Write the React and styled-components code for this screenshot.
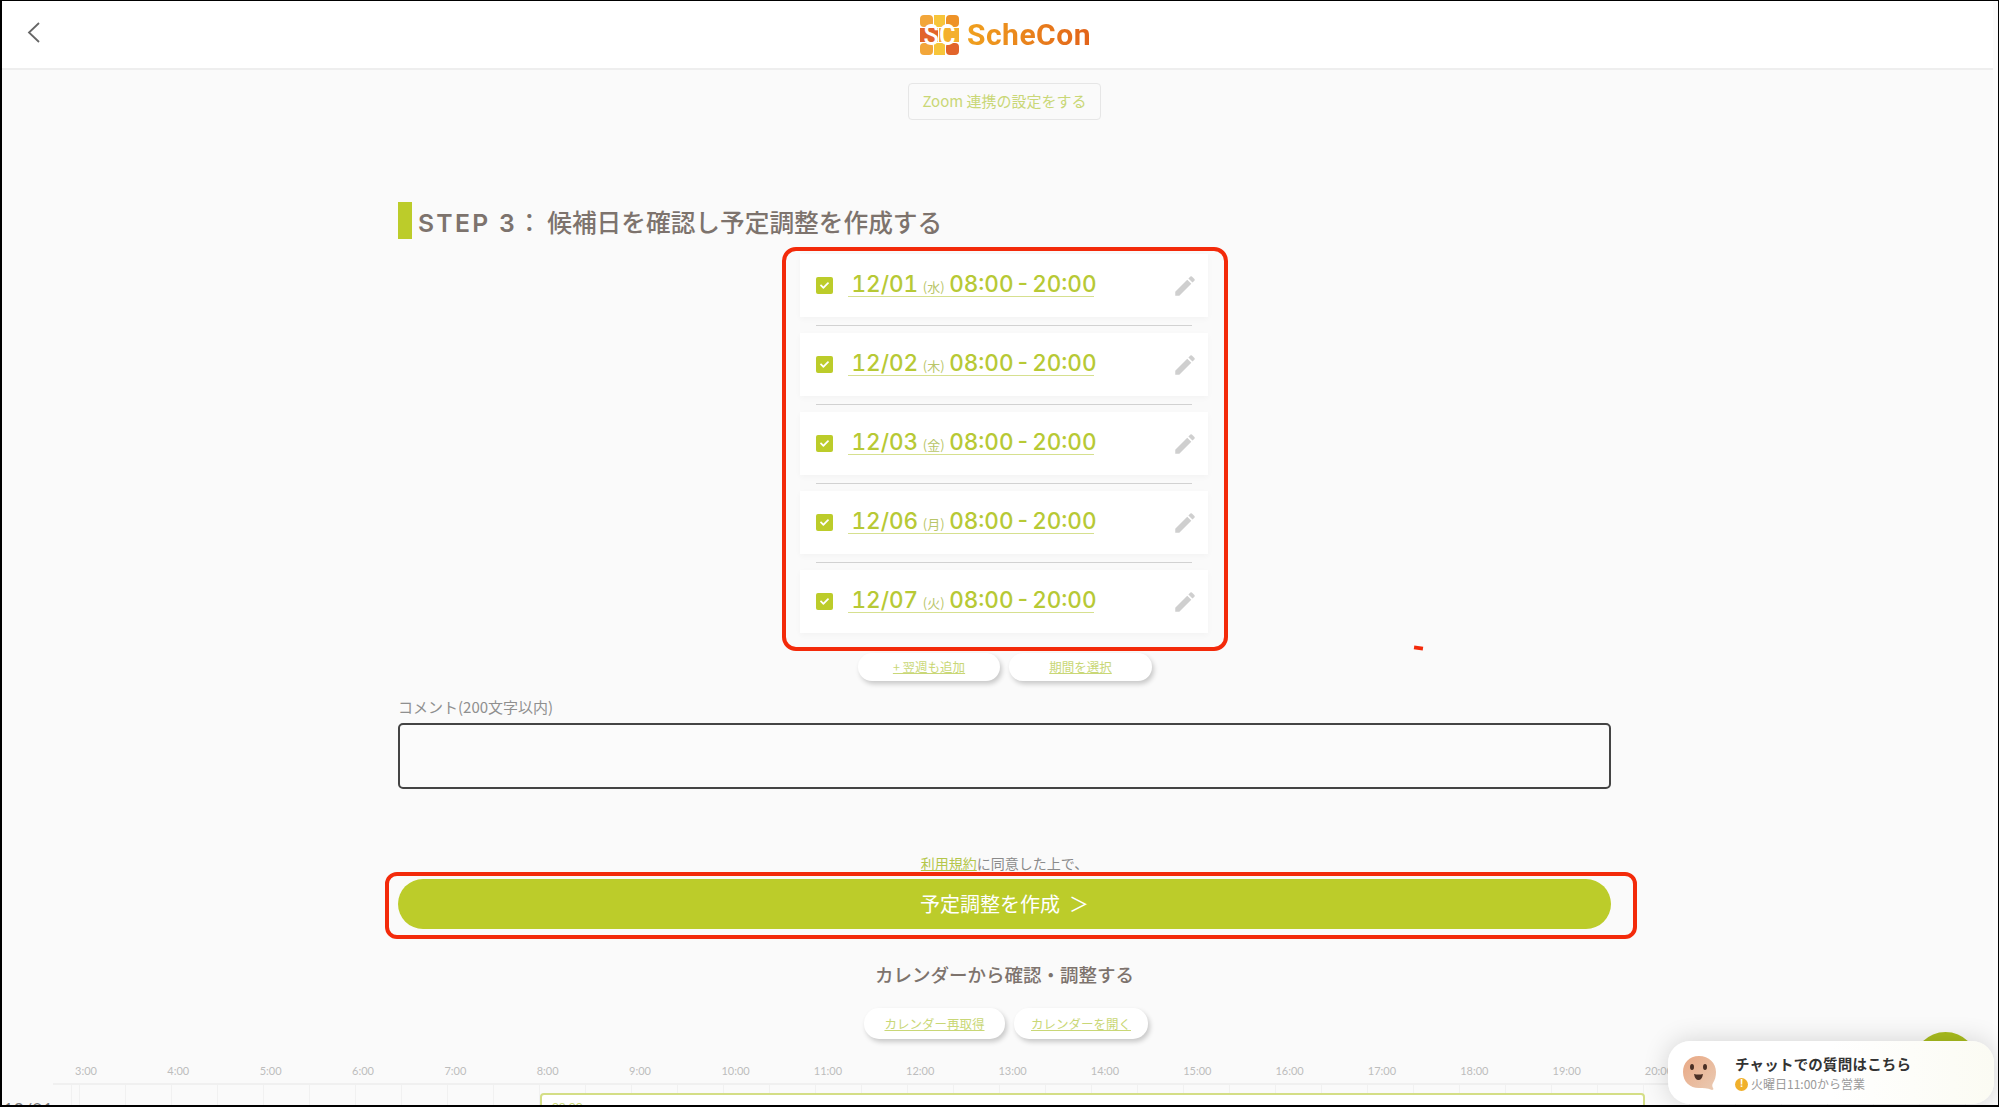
import React from 'react'
import styled, { createGlobalStyle } from 'styled-components'
import { MdEdit } from 'react-icons/md'
import { FaCheck } from 'react-icons/fa'

const GlobalStyle = createGlobalStyle`
html, body {
  margin: 0;
  padding: 0;
  height: 100%;
  overflow: hidden;
  background: #fff;
}
* {
  box-sizing: border-box;
}
`

const jp = `"Noto Sans CJK JP", "Noto Sans", sans-serif`
const green = '#bccc2a'
const paleGreen = '#c9d776'
const HOUR = 92.35
const GRID = 92

const dates = [
  { day: '12/01', week: '水' },
  { day: '12/02', week: '木' },
  { day: '12/03', week: '金' },
  { day: '12/06', week: '月' },
  { day: '12/07', week: '火' },
]
const hours = [3, 4, 5, 6, 7, 8, 9, 10, 11, 12, 13, 14, 15, 16, 17, 18, 19, 20]

function App() {
  return (
    <>
      <GlobalStyle />
      <Page>
        <Scroll>
          <Header>
            <BackLink>
              <svg width="13" height="21" viewBox="0 0 13 21" fill="none">
                <polyline points="12,1 2,10.5 12,20" stroke="#666" strokeWidth="1.8" />
              </svg>
            </BackLink>
            <Logo>
              <svg width="39" height="40" viewBox="0 0 39 40">
                <rect x="0" y="0" width="13" height="12" rx="4" fill="#f2a63a" />
                <rect x="14" y="0" width="11" height="12" fill="#f7c53a" />
                <rect x="26" y="0" width="13" height="12" rx="4" fill="#ee9227" />
                <rect x="0" y="13" width="18" height="14" fill="#e2642a" />
                <rect x="19" y="13" width="20" height="14" fill="#f4b02e" />
                <rect x="0" y="28" width="13" height="12" rx="4" fill="#f2a63a" />
                <rect x="14" y="28" width="11" height="12" fill="#f7c53a" />
                <rect x="26" y="28" width="13" height="12" rx="4" fill="#e2642a" />
                <text x="19.5" y="30" textAnchor="middle" textLength="32" lengthAdjust="spacingAndGlyphs" fontFamily="Roboto, sans-serif" fontWeight="500" fontSize="29" fill="#fff">SC</text>
              </svg>
              <LogoText>ScheCon</LogoText>
            </Logo>
          </Header>

          <Content>
            <ZoomButton>Zoom 連携の設定をする</ZoomButton>
            <StepTitle><StepLabel>STEP 3</StepLabel>： 候補日を確認し予定調整を作成する</StepTitle>

            <DateFrame>
              {dates.map((d, i) => (
                <React.Fragment key={d.day}>
                  {i > 0 && <Divider />}
                  <DateRow>
                    <CheckBox><FaCheck /></CheckBox>
                    <DateLink>
                      {d.day}
                      <Week>({d.week})</Week>
                      08:00 - 20:00
                    </DateLink>
                    <Pencil><MdEdit /></Pencil>
                  </DateRow>
                </React.Fragment>
              ))}
            </DateFrame>

            <PillRow>
              <Pill $w={142} $h={28}>+ 翌週も追加</Pill>
              <Pill $w={143} $h={28}>期間を選択</Pill>
            </PillRow>

            <CommentLabel>コメント(200文字以内)</CommentLabel>
            <CommentBox />

            <Terms><TermsLink>利用規約</TermsLink>に同意した上で、</Terms>
            <SubmitFrame>
              <SubmitButton>予定調整を作成&nbsp;&nbsp;＞</SubmitButton>
            </SubmitFrame>

            <CalendarTitle>カレンダーから確認・調整する</CalendarTitle>
            <CalendarButtons>
              <Pill $w={141} $h={31}>カレンダー再取得</Pill>
              <Pill $w={134} $h={31}>カレンダーを開く</Pill>
            </CalendarButtons>
          </Content>

          <Calendar>
            <HourRow>
              {hours.map((h) => (
                <HourLabel key={h}>{h}:00</HourLabel>
              ))}
            </HourRow>
            <CalendarRow>
              <RowDate>12/01</RowDate>
              <RowGrid>
                <SlotBox $from={8} $to={20}>08:00</SlotBox>
              </RowGrid>
            </CalendarRow>
          </Calendar>
        </Scroll>
        <Gutter />

        <RedMark />
        <ChatBubble />
        <ChatCard>
          <svg width="36" height="36" viewBox="0 0 36 36">
            <defs>
              <linearGradient id="face" x1="0" y1="0" x2="1" y2="1">
                <stop offset="0" stopColor="#e9a884" />
                <stop offset="1" stopColor="#eacbb4" />
              </linearGradient>
            </defs>
            <path d="M17 1 C7 1 1 8 1 17 C1 27 8 33 17 33 C21 33 25 33 30 35 C31 35 32 34 31 33 C30 31 30 30 31 28 C33 25 34 21 34 17 C34 8 27 1 17 1 Z" fill="url(#face)" />
            <ellipse cx="10" cy="12" rx="2" ry="3" fill="#4a2f25" />
            <ellipse cx="23" cy="12" rx="2" ry="3" fill="#4a2f25" />
            <path d="M12 19 Q16.5 20 21 19 Q20 25 16.5 25 Q13 25 12 19 Z" fill="#4a2f25" />
          </svg>
          <ChatText>
            <ChatTitle>チャットでの質問はこちら</ChatTitle>
            <ChatHours>
              <Notice>!</Notice>
              火曜日11:00から営業
            </ChatHours>
          </ChatText>
        </ChatCard>
      </Page>
    </>
  )
}

export default App

const Page = styled.div`
position: relative;
display: flex;
height: 100vh;
overflow: hidden;
border-style: solid;
border-color: #000;
border-width: 1px 1px 2px 2px;
background: #fafafa;
font-family: ${jp};
`
const Scroll = styled.div`
flex: 1;
min-width: 0;
`
const Gutter = styled.div`
width: 5px;
background: #fbfbfb;
`
const Header = styled.div`
display: grid;
grid-template-columns: 396px 1213px 1fr;
align-items: center;
height: 69px;
background: #fff;
border-bottom: 2px solid #eeeeee;
`
const BackLink = styled.a`
display: flex;
padding-left: 25px;
margin-top: -4px;
`
const Logo = styled.div`
display: flex;
justify-content: center;
align-items: center;
gap: 8px;
padding-left: 2px;
`
const LogoText = styled.span`
font-family: Roboto, sans-serif;
font-weight: 700;
font-size: 30px;
line-height: 40px;
letter-spacing: 0.5px;
background: linear-gradient(90deg, #f0a11e, #e2631a);
-webkit-background-clip: text;
background-clip: text;
color: transparent;
`
const Content = styled.div`
display: flex;
flex-direction: column;
align-items: center;
width: 1213px;
margin-left: 396px;
`
const ZoomButton = styled.button`
width: 193px;
height: 37px;
margin-top: 13px;
padding: 0 0 3px;
background: #fafafa;
border: 1px solid #e6e6e6;
border-radius: 4px;
font-family: ${jp};
font-size: 15px;
color: ${paleGreen};
`
const StepTitle = styled.h2`
align-self: flex-start;
height: 37px;
margin: 82px 0 0;
padding-left: 6px;
border-left: 14px solid ${green};
font-size: 24.7px;
font-weight: 500;
line-height: 38px;
white-space: nowrap;
color: #7d736d;
`
const StepLabel = styled.span`
font-family: Inter, sans-serif;
font-weight: 600;
letter-spacing: 2.3px;
`
const DateFrame = styled.div`
width: 446px;
height: 404px;
margin-top: 8px;
padding: 3px 16px 0 14px;
border: 4px solid #f32a0a;
border-radius: 14px;
`
const DateRow = styled.div`
display: flex;
align-items: center;
height: 63px;
padding: 0 10px 0 16px;
background: #fff;
box-shadow: 0 2px 6px rgba(0, 0, 0, 0.03);
`
const Divider = styled.div`
height: 1px;
margin: 8px 16px 7px;
background: #d2d2d2;
`
const CheckBox = styled.span`
display: flex;
justify-content: center;
align-items: center;
width: 17px;
height: 17px;
border-radius: 2px;
background: ${green};
color: #fff;
font-size: 9px;
`
const DateLink = styled.a`
display: block;
width: 246px;
height: 27px;
margin: -4px 0 0 15px;
padding: 0 4px;
border-bottom: 1px solid #d6e08f;
font-family: Inter, sans-serif;
font-size: 22.5px;
font-weight: 500;
font-variant-numeric: tabular-nums;
line-height: 27px;
word-spacing: -4px;
white-space: nowrap;
color: #b7c935;
`
const Week = styled.span`
display: inline-block;
width: 31px;
font-family: ${jp};
font-size: 13px;
font-weight: 400;
text-align: center;
color: #b9c66a;
`
const Pencil = styled.span`
display: flex;
margin: 1px 0 0 auto;
font-size: 26px;
color: #cfcfcf;
`
const PillRow = styled.div`
display: flex;
gap: 9px;
margin-top: 2px;
padding-left: 1px;
`
const Pill = styled.a`
display: flex;
justify-content: center;
align-items: center;
width: ${(p) => p.$w}px;
height: ${(p) => p.$h}px;
padding-bottom: 1px;
border-radius: 15px;
background: #fff;
box-shadow: 2px 3px 5px rgba(0, 0, 0, 0.2);
font-size: 12.5px;
color: ${paleGreen};
text-decoration: underline;
white-space: nowrap;
`
const CommentLabel = styled.div`
align-self: flex-start;
margin-top: 16px;
font-size: 15px;
line-height: 20px;
color: #8f8f8f;
`
const CommentBox = styled.textarea`
display: block;
width: 100%;
height: 66px;
margin-top: 6px;
border: 2px solid #444;
border-radius: 5px;
background: #fbfbfb;
resize: none;
`
const Terms = styled.div`
margin-top: 64px;
font-size: 14px;
line-height: 20px;
color: #8a8a8a;
`
const TermsLink = styled.a`
color: #b4c64a;
text-decoration: underline;
`
const SubmitFrame = styled.div`
align-self: stretch;
margin: -1px -26px 0 -13px;
padding: 3px 22px 6px 9px;
border: 4px solid #f32a0a;
border-radius: 12px;
`
const SubmitButton = styled.button`
display: block;
width: 100%;
height: 50px;
padding: 0 0 2px;
border: 0;
border-radius: 25px;
background: ${green};
font-family: ${jp};
font-size: 20px;
color: #fff;
`
const CalendarTitle = styled.h3`
margin: 22px 0 0;
font-size: 18.5px;
font-weight: 500;
line-height: 26px;
color: #7d736d;
`
const CalendarButtons = styled.div`
display: flex;
gap: 9px;
margin-top: 21px;
padding-left: 3px;
`
const Calendar = styled.div`
margin-top: 25px;
`
const HourRow = styled.div`
display: flex;
height: 19px;
margin-left: 73px;
`
const HourLabel = styled.span`
flex: 0 0 ${HOUR}px;
font-family: Lato, sans-serif;
font-size: 11px;
line-height: 14px;
color: #bdbdbd;
`
const CalendarRow = styled.div`
display: flex;
`
const RowDate = styled.div`
flex: 0 0 49px;
padding: 15px 0 0 1px;
font-family: Lato, sans-serif;
font-size: 18px;
line-height: 22px;
color: #777;
`
const RowGrid = styled.div`
position: relative;
flex: 1;
height: 60px;
border-top: 2px solid #f0f0f0;
background-image: repeating-linear-gradient(90deg, #f1f1f1 0 1px, transparent 1px ${GRID / 2}px);
background-position: 26px 0;
`
const SlotBox = styled.div`
position: absolute;
top: 8px;
left: ${(p) => 27 + (p.$from - 3) * GRID}px;
width: ${(p) => (p.$to - p.$from) * GRID + 1}px;
height: 50px;
padding: 4px 10px;
border: 2px solid #d4de86;
border-radius: 4px;
background: #fff;
font-family: Lato, sans-serif;
font-size: 12px;
color: ${paleGreen};
`
const RedMark = styled.span`
position: absolute;
top: 645px;
left: 1412px;
width: 9px;
height: 4px;
background: #f32a0a;
transform: rotate(8deg);
`
const ChatBubble = styled.div`
position: absolute;
top: 1031px;
right: 20px;
width: 65px;
height: 65px;
border-radius: 50%;
background: #a9bd1e;
`
const ChatCard = styled.div`
position: absolute;
top: 1040px;
right: 4px;
display: flex;
align-items: center;
gap: 17px;
width: 326px;
height: 63px;
padding: 0 0 0 14px;
border-radius: 22px;
background: linear-gradient(90deg, #fff 50%, #fbfbf3);
box-shadow: 0 0 26px rgba(0, 0, 0, 0.16);
`
const ChatText = styled.div`
display: flex;
flex-direction: column;
`
const ChatTitle = styled.div`
font-size: 14.5px;
font-weight: 700;
line-height: 23px;
letter-spacing: 0.2px;
color: #333;
`
const ChatHours = styled.div`
display: flex;
align-items: center;
gap: 3px;
font-size: 12px;
line-height: 18px;
color: #9a9a9a;
`
const Notice = styled.span`
display: flex;
justify-content: center;
align-items: center;
width: 13px;
height: 13px;
border-radius: 50%;
background: #f0b02c;
font-family: Roboto, sans-serif;
font-size: 10px;
font-weight: 700;
color: #fff;
`
